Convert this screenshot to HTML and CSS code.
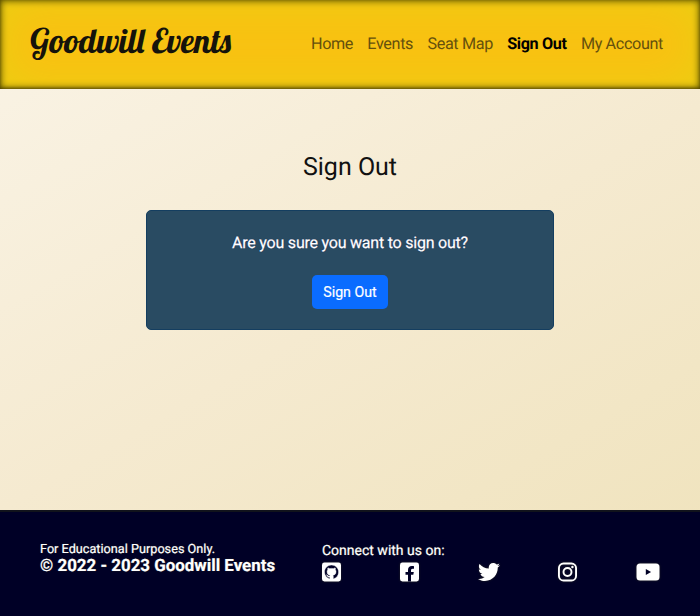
FILE: index.html
```html
<!DOCTYPE html>
<html lang="en">
<head>
<meta charset="utf-8">
<title>Goodwill Events</title>
<link rel="stylesheet" href="styles.css">
</head>
<body>
<header class="navbar">
  <a class="brand">Goodwill Events</a>
  <nav class="links"><a>Home</a><a>Events</a><a>Seat Map</a><a class="active">Sign Out</a><a>My Account</a></nav>
</header>
<main>
  <h1>Sign Out</h1>
  <section class="card">
    <p>Are you sure you want to sign out?</p>
    <button>Sign Out</button>
  </section>
</main>
<footer>
  <div class="legal"><p>For Educational Purposes Only.</p><strong>© 2022 - 2023 Goodwill Events</strong></div>
  <div class="connect">
    <p>Connect with us on:</p>
    <div class="icons">
      <svg width="19" height="20" viewBox="0 0 19 20"><rect y=".5" width="19" height="19" rx="2.4" fill="#fff"/><path transform="translate(2.5 3) scale(.88)" fill="#000026" stroke="#fff" stroke-width=".5" d="M8 0C3.58 0 0 3.58 0 8c0 3.54 2.29 6.53 5.47 7.59.4.07.55-.17.55-.38 0-.19-.01-.82-.01-1.49-2.01.37-2.53-.49-2.69-.94-.09-.23-.48-.94-.82-1.13-.28-.15-.68-.52-.01-.53.63-.01 1.08.58 1.23.82.72 1.21 1.87.87 2.33.66.07-.52.28-.87.51-1.07-1.78-.2-3.64-.89-3.64-3.95 0-.87.31-1.59.82-2.15-.08-.2-.36-1.02.08-2.12 0 0 .67-.21 2.2.82.64-.18 1.32-.27 2-.27.68 0 1.36.09 2 .27 1.53-1.04 2.2-.82 2.2-.82.44 1.1.16 1.92.08 2.12.51.56.82 1.27.82 2.15 0 3.07-1.87 3.75-3.65 3.95.29.25.54.73.54 1.48 0 1.07-.01 1.93-.01 2.2 0 .21.15.46.55.38A8.01 8.01 0 0 0 16 8c0-4.42-3.58-8-8-8z"/></svg>
      <svg width="19" height="20" viewBox="0 0 19 20"><rect y=".5" width="19" height="19" rx="2.4" fill="#fff"/><path fill="#000026" d="M8 19.5v-6.7H5.5V10H8V7.9c0-2.5 1.5-3.9 3.8-3.9.8 0 1.8.1 2.2.2v2.5h-1.3c-1.3 0-1.7.8-1.7 1.6V10h2.8l-.5 2.8H11v6.7z"/></svg>
      <svg width="22" height="22" viewBox="0 0 512 512"><path fill="#fff" d="M459.37 151.716c.325 4.548.325 9.097.325 13.645 0 138.72-105.583 298.558-298.558 298.558-59.452 0-114.68-17.219-161.137-47.106 8.447.974 16.568 1.299 25.34 1.299 49.055 0 94.213-16.568 130.274-44.832-46.132-.975-84.792-31.188-98.112-72.772 6.498.974 12.995 1.624 19.818 1.624 9.421 0 18.843-1.3 27.614-3.573-48.081-9.747-84.143-51.98-84.143-102.985v-1.299c13.969 7.797 30.214 12.67 47.431 13.319-28.264-18.843-46.781-51.005-46.781-87.391 0-19.492 5.197-37.36 14.294-52.954 51.655 63.675 129.3 105.258 216.365 109.807-1.624-7.797-2.599-15.918-2.599-24.04 0-57.828 46.782-104.934 104.934-104.934 30.213 0 57.502 12.67 76.67 33.137 23.715-4.548 46.456-13.32 66.599-25.34-7.798 24.366-24.366 44.833-46.132 57.827 21.117-2.273 41.584-8.122 60.426-16.243-14.292 20.791-32.161 39.308-52.628 54.253z"/></svg>
      <svg width="19" height="20" viewBox="0 0 19 20"><g fill="none" stroke="#fff" stroke-width="1.9"><rect x=".95" y="1.45" width="17.1" height="17.1" rx="4.6"/><circle cx="9.5" cy="10" r="4"/></g><circle cx="14.4" cy="5" r="1.2" fill="#fff"/></svg>
      <svg width="24" height="20" viewBox="0 0 24 20"><rect x=".5" y="1.4" width="23" height="17" rx="3.5" fill="#fff"/><path fill="#000026" d="M9.8 6.9v6.2l5.3-3.1z"/></svg>
    </div>
  </div>
</footer>
</body>
</html>
```
FILE: styles.css
```css
* { box-sizing: border-box; }
body { margin: 0; height: 616px; display: flex; flex-direction: column; font-family: Roboto, sans-serif; text-rendering: geometricPrecision; background: linear-gradient(150deg, #faf4e7 0%, #f5ead0 50%, #efe2ba 100%); }
p, h1 { margin: 0; font-weight: 400; }
.navbar { height: 88.5px; flex: none; padding: 0 37px 2px 30px; display: flex; align-items: center; justify-content: space-between; background: #f9c112; box-shadow: inset 0 -1px 3px rgba(60,50,0,.6), inset 0 0 7px 1px #5c5200, inset 0 0 50px #e9d112; }
.brand { font: 33.8px/40px Lobster, "Liberation Serif", serif; color: #15130b; white-space: nowrap; padding-bottom: 4px; }
.links { display: flex; gap: 14.3px; font-size: 16.2px; letter-spacing: -.36px; color: #65500d; white-space: nowrap; }
.active { font-weight: 700; color: #000; }
main { flex: 1; display: flex; flex-direction: column; align-items: center; padding-top: 64.5px; }
h1 { font-size: 25px; line-height: 30px; color: #111; }
.card { margin-top: 27px; width: 408px; height: 120px; border: 1px solid #143e60; border-radius: 5px; background: #294b62; color: #fff; display: flex; flex-direction: column; align-items: center; padding-top: 22px; }
.card p { font-size: 16px; letter-spacing: -.22px; line-height: 20px; text-shadow: 0 0 1px #000040; -webkit-text-stroke: .25px #fff; }
button { margin-top: 22px; width: 76px; height: 34px; padding: 0; border: 0; border-radius: 5px; background: #0a6cff; color: #fff; font: 14.2px Roboto, sans-serif; -webkit-text-stroke: .2px #fff; }
footer { height: 106px; flex: none; background: #000026; border-top: 2px solid #11131c; color: #fff; display: flex; padding: 28px 40px 0; text-shadow: 0 0 2px #222; }
.legal { width: 282px; white-space: nowrap; }
.legal p { font-size: 12.7px; line-height: 17px; padding-top: 1px; margin-bottom: -1px; -webkit-text-stroke: .2px #fff; }
.legal strong { display: block; font-size: 16.9px; line-height: 18px; -webkit-text-stroke: .2px #fff; }
.connect { flex: 1; padding-top: 1px; }
.connect p { font-size: 14px; line-height: 20px; -webkit-text-stroke: .2px #fff; }
.icons { display: flex; justify-content: space-between; align-items: center; height: 21px; }
svg { filter: drop-shadow(0 0 1px #222); }
```
